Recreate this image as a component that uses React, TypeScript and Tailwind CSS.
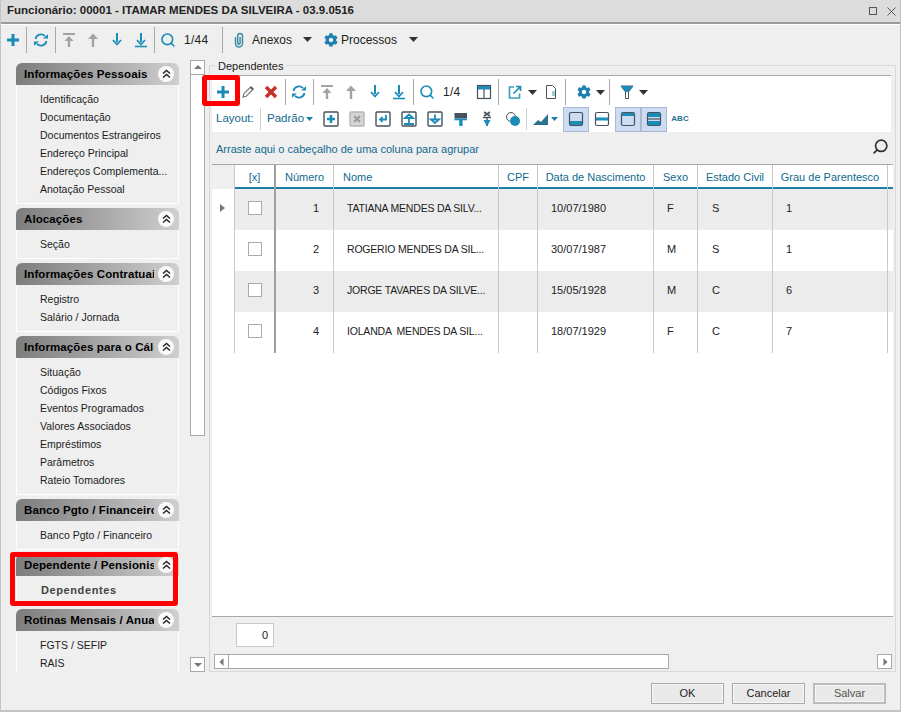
import type { ReactNode } from "react";
import { Search } from "lucide-react";
import { FaCog } from "react-icons/fa";

const sections = [
  { title: "Informações Pessoais", items: ["Identificação", "Documentação", "Documentos Estrangeiros", "Endereço Principal", "Endereços Complementa...", "Anotação Pessoal"] },
  { title: "Alocações", items: ["Seção"] },
  { title: "Informações Contratuais", items: ["Registro", "Salário / Jornada"] },
  { title: "Informações para o Cálculo", items: ["Situação", "Códigos Fixos", "Eventos Programados", "Valores Associados", "Empréstimos", "Parâmetros", "Rateio Tomadores"] },
  { title: "Banco Pgto / Financeiro", items: ["Banco Pgto / Financeiro"] },
  { title: "Dependente / Pensionista", items: ["Dependentes"], active: true },
  { title: "Rotinas Mensais / Anuais", items: ["FGTS / SEFIP", "RAIS", "DIRF"] },
];

const rows = [
  { num: 1, nome: "TATIANA MENDES DA SILV...", nasc: "10/07/1980", sexo: "F", civil: "S", grau: 1 },
  { num: 2, nome: "ROGERIO MENDES DA SIL...", nasc: "30/07/1987", sexo: "M", civil: "S", grau: 1 },
  { num: 3, nome: "JORGE TAVARES DA SILVE...", nasc: "15/05/1928", sexo: "M", civil: "C", grau: 6 },
  { num: 4, nome: "IOLANDA  MENDES DA SIL...", nasc: "18/07/1929", sexo: "F", civil: "C", grau: 7 },
];

const gridCols = "grid grid-cols-[23px_41px_58px_165px_39px_116px_44px_75px_115px_1fr]";
const BLUE = "#1b8cb8";
const GRAY = "#a3a3a3";
const DARK = "#46525c";

const Svg = ({ children, size = 16 }: { children: ReactNode; size?: number }) => (
  <svg width={size} height={size} viewBox="0 0 16 16" fill="none">
    {children}
  </svg>
);

const PlusIcon = () => (
  <Svg>
    <path d="M8 2v12M2 8h12" stroke={BLUE} strokeWidth="3" />
  </Svg>
);
const PencilIcon = () => (
  <Svg>
    <path d="M3 13l.8-3.2L10.6 3l2.4 2.4-6.8 6.8L3 13z" stroke="#777" strokeWidth="1.1" fill="#fff" />
    <path d="M10.6 3L13 5.4" stroke="#555" strokeWidth="2" />
  </Svg>
);
const CrossIcon = () => (
  <Svg>
    <path d="M3 3l10 10M13 3L3 13" stroke="#c9302c" strokeWidth="3.4" />
  </Svg>
);
const RefreshIcon = () => (
  <Svg>
    <path d="M2.5 7A5.6 5.6 0 0 1 12 4.2" stroke={BLUE} strokeWidth="1.8" />
    <path d="M13.5 9A5.6 5.6 0 0 1 4 11.8" stroke={BLUE} strokeWidth="1.8" />
    <path d="M10 6.4h5V2.2zM6 9.6H1v4.2z" fill={BLUE} />
  </Svg>
);
const ArrowIcon = ({ up, bar, color }: { up?: boolean; bar?: boolean; color: string }) => (
  <Svg>
    {up ? (
      <>
        {bar && <path d="M2 2h12" stroke={color} strokeWidth="2" />}
        <path d={bar ? "M8 15V6" : "M8 15V4"} stroke={color} strokeWidth="2.4" />
        <path d={bar ? "M3.5 9L8 4l4.5 5z" : "M3 7L8 1.5 13 7z"} fill={color} />
      </>
    ) : (
      <>
        {bar && <path d="M2 14.5h12" stroke={color} strokeWidth="1.6" />}
        <path d="M8 1v9" stroke={color} strokeWidth="2" />
        <path d="M4 8l4 4.5L12 8" stroke={color} strokeWidth="1.8" />
      </>
    )}
  </Svg>
);
const ClipIcon = () => (
  <Svg>
    <path d="M4.5 5v6.5a3.5 3.5 0 0 0 7 0V4a2.4 2.4 0 0 0-4.8 0v7a1.2 1.2 0 0 0 2.4 0V5" stroke="#3d8ea3" strokeWidth="1.5" />
  </Svg>
);
const TableIcon = () => (
  <Svg>
    <rect x="1.5" y="1.5" width="13" height="13" stroke={DARK} strokeWidth="1.2" />
    <path d="M2 2h12v3.5H2z" fill={BLUE} />
    <path d="M8 5v9.5" stroke={DARK} strokeWidth="1.2" />
  </Svg>
);
const ExportIcon = () => (
  <Svg>
    <path d="M7 3H2.5v11h10V9.5" stroke="#3fa0b8" strokeWidth="1.7" />
    <path d="M6.5 9.5L13 3M9 2.5h4.5V7" stroke={BLUE} strokeWidth="1.7" />
  </Svg>
);
const DocIcon = () => (
  <Svg>
    <path d="M3.5 1.5h6l3 3v10h-9z" stroke={DARK} strokeWidth="1" fill="#fff" />
    <path d="M9 7h3v5H9z" fill="#9fd0d8" />
  </Svg>
);
const FunnelIcon = () => (
  <Svg>
    <path d="M2 2h12L9.5 8v6.5h-3V8z" stroke={DARK} strokeWidth="1" fill="#fff" />
    <path d="M2 2h12L9.5 8h-3z" fill={BLUE} />
  </Svg>
);
const Caret = ({ color = "#333" }: { color?: string }) => (
  <svg width="9" height="5" viewBox="0 0 9 5">
    <path d="M0 0h9L4.5 5z" fill={color} />
  </svg>
);
const SmallCaret = () => (
  <svg width="7" height="4" viewBox="0 0 7 4">
    <path d="M0 0h7L3.5 4z" fill="#1b7ea6" />
  </svg>
);
const BoxIcon = ({ children, gray }: { children: ReactNode; gray?: boolean }) => (
  <Svg>
    <rect x="1" y="1" width="14" height="14" rx="1" stroke={gray ? "#b5b5b5" : DARK} strokeWidth="1.4" fill={gray ? "#d5d5d5" : "#fff"} />
    {children}
  </Svg>
);
const PaintIcon = () => (
  <Svg>
    <path d="M1.5 2h12.5v5.5H1.5z" fill={DARK} />
    <path d="M1.5 7.5h12.5v1.8H1.5z" fill={BLUE} />
    <path d="M6.2 9h3.4v6H6.2z" fill={BLUE} />
  </Svg>
);
const PinIcon = () => (
  <Svg>
    <path d="M5 1l6 4M11 1L5 5" stroke={DARK} strokeWidth="1.6" />
    <path d="M4 6.5h8" stroke={DARK} strokeWidth="1.4" />
    <path d="M8 6v9" stroke={DARK} strokeWidth="1.4" />
    <path d="M4.5 9h7L8 15.5z" fill={BLUE} />
  </Svg>
);
const ShapesIcon = () => (
  <Svg>
    <circle cx="6" cy="6" r="4.5" stroke={DARK} strokeWidth="1" fill="#fff" />
    <circle cx="10" cy="10" r="5" fill={BLUE} />
  </Svg>
);
const ChartIcon = () => (
  <Svg>
    <path d="M0 14l5-5 3 2 7-8v11z" fill="#28718f" />
  </Svg>
);
const PaneIcon = ({ kind }: { kind: "bottom" | "middle" | "top" | "double" }) => (
  <Svg>
    <rect x="1.5" y="1.5" width="13" height="13" rx="1.5" stroke={DARK} strokeWidth="1.2" />
    {kind === "bottom" && <path d="M2 10h12v4H2z" fill={BLUE} />}
    {kind === "middle" && <path d="M2 6.5h12v3H2z" fill={BLUE} />}
    {kind === "top" && <path d="M2 2h12v3H2z" fill={BLUE} />}
    {kind === "double" && <path d="M2 2h12v4H2zM2 10h12v4H2z" fill={BLUE} />}
    {kind === "double" && <path d="M2 8h12" stroke={DARK} strokeWidth="1.2" />}
  </Svg>
);

const Tool = ({ children, className = "w-6" }: { children: ReactNode; className?: string }) => (
  <div className={"flex items-center justify-center shrink-0 " + className}>{children}</div>
);
const Sep = ({ className = "h-[26px] ml-[2px] mr-[1px]" }: { className?: string }) => (
  <div className={"w-px shrink-0 bg-[#a8a8a8] " + className} />
);

const Toggle = ({ kind, on }: { kind: "bottom" | "middle" | "top" | "double"; on?: boolean }) => (
  <div className={"flex items-center justify-center w-[26px] h-[25px] shrink-0 " + (on ? "bg-[#cddcf3] border border-[#a9b9cf]" : "")}>
    <PaneIcon kind={kind} />
  </div>
);

const SectionCard = ({ title, items, active }: { title: string; items: string[]; active?: boolean }) => (
  <div className="shrink-0">
    <div className="h-[22px] pt-[1px] rounded-t-md bg-gradient-to-r from-[#7d7d7d] to-[#cfcfcf] flex items-center pl-2 relative">
      <div className="w-[130px] overflow-hidden whitespace-nowrap font-bold text-black text-[11.5px] tracking-[0.1px]">{title}</div>
      <div className="absolute right-[5px] top-[3px] w-[16px] h-[16px] rounded-full bg-white/90 flex items-center justify-center">
        <svg width="9" height="10" viewBox="0 0 9 10" fill="none">
          <path d="M1 4.5L4.5 1.5 8 4.5M1 8.5L4.5 5.5 8 8.5" stroke="#222" strokeWidth="1.4" />
        </svg>
      </div>
    </div>
    <div className="border-x border-b border-white py-[5px]">
      {items.map((item) => (
        <div key={item} className={"h-[18px] leading-[18px] whitespace-nowrap " + (active ? "pl-[24px] text-[11px] font-bold text-[#444] tracking-[0.6px]" : "pl-[23px] text-[10.5px] text-[#1c1c1c]")}>
          {item}
        </div>
      ))}
    </div>
  </div>
);

const FooterButton = ({ label, strong }: { label: string; strong?: boolean }) => (
  <button className={"w-[73px] h-[21px] bg-[#e9e9e9] text-[11px] shadow-[inset_0_0_0_1px_#f6f6f6] " + (strong ? "border-2 border-[#bcbcbc] text-[#555]" : "border border-[#a9a9a9] text-[#222]")}>
    {label}
  </button>
);

const ScrollBtn = ({ dir }: { dir: "up" | "down" | "left" | "right" }) => {
  const d = { up: "M1 6L5 2l4 4z", down: "M1 3l4 4 4-4z", left: "M6.5 1v8L2.5 5z", right: "M3.5 1v8l4-4z" }[dir];
  return (
    <div className="w-[15px] h-[15px] shrink-0 bg-white border border-[#a8a8a8] flex items-center justify-center">
      <svg width="10" height="10" viewBox="0 0 10 10">
        <path d={d} fill="#777" />
      </svg>
    </div>
  );
};

export default function App() {
  return (
    <div className="w-[901px] h-[712px] relative flex flex-col overflow-hidden bg-[#efefef] border-l border-r border-b-2 border-[#c4c4c4] text-[11px] font-['Liberation_Sans',Arial,sans-serif]">
      {/* title */}
      <div className="h-[24px] shrink-0 bg-[#dcdcdc] border-b-2 border-b-[#9a9a9a] flex items-center justify-between pl-[6px] pr-[2px]">
        <span className="font-bold text-[11.5px] text-[#222]">Funcionário: 00001 - ITAMAR MENDES DA SILVEIRA - 03.9.0516</span>
        <div className="flex items-center gap-[10px] pr-[2px]">
          <div className="w-[8px] h-[8px] border border-[#555]" />
          <svg width="9" height="9" viewBox="0 0 9 9"><path d="M0.5 0.5l8 8M8.5 0.5l-8 8" stroke="#555" /></svg>
        </div>
      </div>

      {/* main toolbar */}
      <div className="h-[30px] shrink-0 border-t border-white flex items-center">
        <Tool className="w-[24px]"><PlusIcon /></Tool>
        <Sep className="h-[26px] mx-[1px]" />
        <Tool className="w-[26px]"><RefreshIcon /></Tool>
        <Sep className="h-[26px] mx-[1px]" />
        <Tool className="w-[24px]"><ArrowIcon up bar color={GRAY} /></Tool>
        <Tool className="w-[24px]"><ArrowIcon up color={GRAY} /></Tool>
        <Tool className="w-[24px]"><ArrowIcon color={BLUE} /></Tool>
        <Tool className="w-[24px]"><ArrowIcon bar color={BLUE} /></Tool>
        <Sep className="h-[26px] mx-[1px]" />
        <Tool className="w-[24px]"><Search size={16} color={BLUE} strokeWidth={2.4} /></Tool>
        <span className="w-[41px] text-[12px] text-[#222] pl-[4px] tracking-[0.3px]">1/44</span>
        <Sep className="h-[26px] mx-[1px]" />
        <Tool className="w-[26px] ml-[2px]"><ClipIcon /></Tool>
        <span className="text-[12px] text-[#222] w-[48px]">Anexos</span>
        <Tool className="w-[14px]"><Caret /></Tool>
        <Tool className="w-[20px] ml-[7px]"><FaCog size={14} color="#1f7fb0" /></Tool>
        <span className="text-[12px] text-[#222] w-[65px]">Processos</span>
        <Tool className="w-[14px]"><Caret /></Tool>
      </div>

      <div className="flex-1 min-h-0 flex pt-[6px]">
        {/* sections */}
        <div className="w-[163px] ml-[15px] pt-[3px] flex flex-col gap-[4px] overflow-hidden shrink-0">
          {sections.map((s) => (
            <SectionCard key={s.title} title={s.title} items={s.items} active={s.active} />
          ))}
        </div>

        {/* vertical scroll */}
        <div className="w-[15px] ml-[11px] flex flex-col shrink-0">
          <ScrollBtn dir="up" />
          <div className="h-[361px] bg-white border-x border-b border-[#a8a8a8]" />
          <div className="flex-1" />
          <ScrollBtn dir="down" />
        </div>

        {/* group box */}
        <div className="w-[687px] ml-[4px] mt-[5px] border border-[#d8d8d8] relative flex flex-col px-[2px] pt-[9px] pb-[2px] shrink-0">
          <div className="absolute left-[5px] top-[-8px] bg-[#efefef] px-[3px] text-[#222] text-[11px]">Dependentes</div>

          <div className="border-t border-[#a8a8a8] bg-white shrink-0 mr-[2px]">
            <div className="h-[30px] pt-[2px] flex items-center">
              <Tool className="w-[22px]"><PlusIcon /></Tool>
              <Tool className="w-[24px] ml-[2px]"><PencilIcon /></Tool>
              <Tool className="w-[22px]"><CrossIcon /></Tool>
              <Sep className="h-[26px] ml-[3px] mr-[1px]" />
              <Tool className="w-[24px]"><RefreshIcon /></Tool>
              <Sep />
              <Tool className="w-[24px]"><ArrowIcon up bar color={GRAY} /></Tool>
              <Tool className="w-[24px]"><ArrowIcon up color={GRAY} /></Tool>
              <Tool className="w-[24px]"><ArrowIcon color={BLUE} /></Tool>
              <Tool className="w-[24px]"><ArrowIcon bar color={BLUE} /></Tool>
              <Sep />
              <Tool className="w-[24px]"><Search size={16} color={BLUE} strokeWidth={2.4} /></Tool>
              <span className="w-[33px] pl-[4px] text-[12px] text-[#222] tracking-[0.3px]">1/4</span>
              <Tool className="w-[24px]"><TableIcon /></Tool>
              <Sep />
              <Tool className="w-[24px] ml-[3px]"><ExportIcon /></Tool>
              <Tool className="w-[10px]"><Caret /></Tool>
              <Tool className="w-[24px] ml-[2px]"><DocIcon /></Tool>
              <Sep />
              <Tool className="w-[24px] ml-[5px]"><FaCog size={14} color="#1f7fb0" /></Tool>
              <Tool className="w-[9px]"><Caret /></Tool>
              <Sep className="h-[26px] ml-[4px] mr-[1px]" />
              <Tool className="w-[24px] ml-[4px]"><FunnelIcon /></Tool>
              <Tool className="w-[9px]"><Caret /></Tool>
            </div>
            <div className="h-[26px] flex items-center">
              <span className="pl-[4px] w-[47px] text-[#0f6a8f] text-[11.5px]">Layout:</span>
              <Sep className="h-[22px] mx-[1px] !bg-[#d0d0d0]" />
              <span className="pl-[5px] w-[43px] text-[#0f6a8f] text-[11.5px]">Padrão</span>
              <Tool className="w-[8px]"><SmallCaret /></Tool>
              <Tool className="w-[26px] ml-[5px]"><BoxIcon><path d="M8 4v8M4 8h8" stroke={BLUE} strokeWidth="2.6" /></BoxIcon></Tool>
              <Tool className="w-[26px]"><BoxIcon gray><path d="M5 5l6 6M11 5l-6 6" stroke="#999" strokeWidth="2" /></BoxIcon></Tool>
              <Tool className="w-[26px]"><BoxIcon><path d="M11 4v4.5H6M7.5 6.2L5 8.5l2.5 2.3" stroke={BLUE} strokeWidth="1.8" /></BoxIcon></Tool>
              <Tool className="w-[26px]"><BoxIcon><path d="M8 12V6M4 7l4-3.5L12 7zM3 13h10" stroke={BLUE} strokeWidth="1.8" /></BoxIcon></Tool>
              <Tool className="w-[26px]"><BoxIcon><path d="M8 3.5v6M4 8.5L8 12l4-3.5z" stroke={BLUE} strokeWidth="1.8" /></BoxIcon></Tool>
              <Tool className="w-[26px]"><PaintIcon /></Tool>
              <Tool className="w-[26px]"><PinIcon /></Tool>
              <Tool className="w-[26px]"><ShapesIcon /></Tool>
              <Sep className="h-[22px] mr-[1px] !bg-[#d0d0d0]" />
              <Tool className="w-[22px] ml-[2px]"><ChartIcon /></Tool>
              <Tool className="w-[8px] -ml-[2px]"><SmallCaret /></Tool>
              <div className="w-[5px] shrink-0" />
              <Toggle kind="bottom" on />
              <Toggle kind="middle" />
              <Toggle kind="top" on />
              <Toggle kind="double" on />
              <span className="w-[26px] text-center font-bold text-[8px] text-[#1f6f8f]">ABC</span>
            </div>
          </div>

          <div className="flex-1 min-h-0 flex flex-col">
            {/* group row */}
            <div className="h-[32px] shrink-0 flex items-center justify-between pl-[4px] pr-[4px] pt-[2px]">
              <span className="text-[#0f6a8f] text-[11px]">Arraste aqui o cabeçalho de uma coluna para agrupar</span>
              <Search size={17} color="#333" strokeWidth={2.4} className="-scale-x-100 -mt-[5px]" />
            </div>

            {/* grid */}
            <div className="flex-1 min-h-0 bg-white border-t border-[#a8a8a8] border-b flex flex-col">
              <div className={gridCols + " h-[24px] shrink-0 border-b-2 border-[#1b7ea6] text-[#0f6a8f] text-[11px] leading-[24px] text-center"}>
                <div className="bg-[#efefef] border-r border-[#c8c8c8]" />
                <div className="border-r-2 border-[#a0a0a0]">[x]</div>
                <div className="border-r border-[#c8c8c8]">Número</div>
                <div className="border-r border-[#c8c8c8] text-left pl-[9px]">Nome</div>
                <div className="border-r border-[#c8c8c8]">CPF</div>
                <div className="border-r border-[#c8c8c8]">Data de Nascimento</div>
                <div className="border-r border-[#c8c8c8]">Sexo</div>
                <div className="border-r border-[#c8c8c8]">Estado Civil</div>
                <div className="border-r border-[#c8c8c8]">Grau de Parentesco</div>
                <div />
              </div>
              {rows.map((r, i) => (
                <div key={r.num} className={gridCols + " h-[41px] shrink-0 text-[#222] text-[11px] leading-[38px] " + (i % 2 === 0 ? "bg-[#ececec]" : "bg-white")}>
                  <div className="border-r border-[#c8c8c8] bg-white relative">
                    {i === 0 && (
                      <svg className="absolute left-[8px] top-[15px]" width="5" height="8" viewBox="0 0 5 8">
                        <path d="M0 0l5 4-5 4z" fill="#777" />
                      </svg>
                    )}
                  </div>
                  <div className="border-r-2 border-[#a0a0a0] flex items-start justify-center pt-[12px]">
                    <div className="w-[14px] h-[14px] bg-white border border-[#aaa]" />
                  </div>
                  <div className="border-r border-[#c8c8c8] text-right pr-[14px]">{r.num}</div>
                  <div className="border-r border-[#c8c8c8] pl-[13px] whitespace-pre overflow-hidden text-[10.5px] tracking-[-0.2px]">{r.nome}</div>
                  <div className="border-r border-[#c8c8c8]" />
                  <div className="border-r border-[#c8c8c8] pl-[13px]">{r.nasc}</div>
                  <div className="border-r border-[#c8c8c8] pl-[13px]">{r.sexo}</div>
                  <div className="border-r border-[#c8c8c8] pl-[14px]">{r.civil}</div>
                  <div className="border-r border-[#c8c8c8] pl-[13px]">{r.grau}</div>
                  <div />
                </div>
              ))}
            </div>

            {/* grid footer */}
            <div className="h-[52px] shrink-0 flex flex-col pt-[6px]">
              <div className="w-[38px] h-[24px] ml-[24px] bg-white border border-[#c8c8c8] text-right pr-[5px] leading-[22px] text-[#222]">0</div>
              <div className="flex items-center mt-[7px] pl-[2px] pr-[1px]">
                <ScrollBtn dir="left" />
                <div className="w-[440px] h-[15px] bg-white border-y border-r border-[#a8a8a8]" />
                <div className="flex-1" />
                <ScrollBtn dir="right" />
              </div>
            </div>
          </div>
        </div>
      </div>

      {/* footer */}
      <div className="h-[38px] shrink-0 flex items-center justify-end gap-[8px] pr-[14px] pt-[5px]">
        <FooterButton label="OK" />
        <FooterButton label="Cancelar" />
        <FooterButton label="Salvar" strong />
      </div>

      {/* red highlights */}
      <div className="absolute left-[9px] top-[552px] w-[168px] h-[54px] border-[5px] border-[#ff0000] rounded-[3px]" />
      <div className="absolute left-[201px] top-[75px] w-[38px] h-[31px] border-[5px] border-[#ff0000] rounded-[3px]" />
    </div>
  );
}
